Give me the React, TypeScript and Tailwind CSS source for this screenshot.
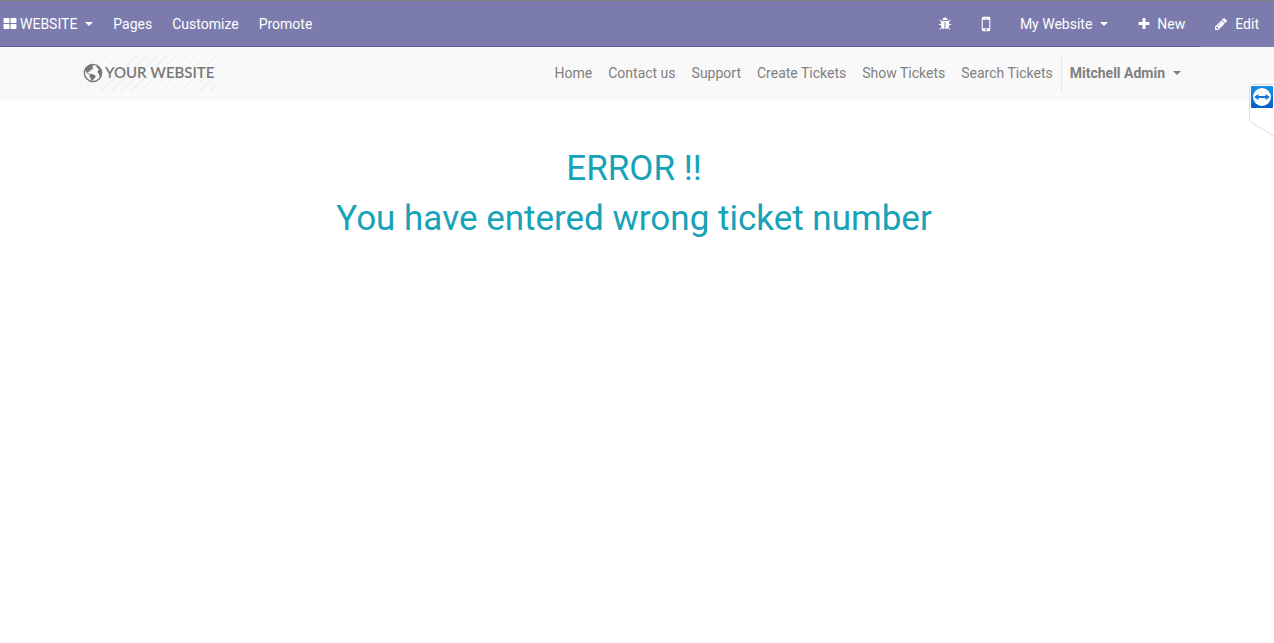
import React from "react";

const icons = {
  tiles:
    "M832 1024v384q0 52-38 90t-90 38h-512q-52 0-90-38t-38-90v-384q0-52 38-90t90-38h512q52 0 90 38t38 90zm0-768v384q0 52-38 90t-90 38h-512q-52 0-90-38t-38-90v-384q0-52 38-90t90-38h512q52 0 90 38t38 90zm896 768v384q0 52-38 90t-90 38h-512q-52 0-90-38t-38-90v-384q0-52 38-90t90-38h512q52 0 90 38t38 90zm0-768v384q0 52-38 90t-90 38h-512q-52 0-90-38t-38-90v-384q0-52 38-90t90-38h512q52 0 90 38t38 90z",
  plus:
    "M1600 736v192q0 40-28 68t-68 28h-416v416q0 40-28 68t-68 28h-192q-40 0-68-28t-28-68v-416h-416q-40 0-68-28t-28-68v-192q0-40 28-68t68-28h416v-416q0-40 28-68t68-28h192q40 0 68 28t28 68v416h416q40 0 68 28t28 68z",
  pencil:
    "M491 1536l91-91-235-235-91 91v107h128v128h107zm523-928q0-22-22-22-10 0-17 7l-542 542q-7 7-7 17 0 22 22 22 10 0 17-7l542-542q7-7 7-17zm-54-192l416 416-832 832h-416v-416zm683 96q0 53-37 90l-166 166-416-416 166-165q36-38 90-38 53 0 91 38l235 234q37 39 37 91z",
  bug:
    "M1696 960q0 26-19 45t-45 19h-224q0 171-67 290l208 209q19 19 19 45t-19 45q-18 19-45 19t-45-19l-198-197q-5 5-15 13t-42 28.5-65 36.5-82 29-97 13v-896h-128v896q-51 0-101.5-13.5t-87-33-66-39-43.5-32.5l-15-14-183 207q-20 21-48 21-24 0-43-16-19-18-20.5-44.5t15.5-46.5l202-227q-58-114-58-274h-224q-26 0-45-19t-19-45 19-45 45-19h224v-294l-173-173q-19-19-19-45t19-45 45-19 45 19l173 173h844l173-173q19-19 45-19t45 19 19 45-19 45l-173 173v294h224q26 0 45 19t19 45zm-480-576h-640q0-133 93.5-226.5t226.5-93.5 226.5 93.5 93.5 226.5z",
  mobile:
    "M976 1408q0-33-23.5-56.5t-56.5-23.5-56.5 23.5-23.5 56.5 23.5 56.5 56.5 23.5 56.5-23.5 23.5-56.5zm208-160v-704q0-13-9.5-22.5t-22.5-9.5h-512q-13 0-22.5 9.5t-9.5 22.5v704q0 13 9.5 22.5t22.5 9.5h512q13 0 22.5-9.5t9.5-22.5zm-192-848q0-16-16-16h-160q-16 0-16 16t16 16h160q16 0 16-16zm288-16v1024q0 52-38 90t-90 38h-512q-52 0-90-38t-38-90v-1024q0-52 38-90t90-38h512q52 0 90 38t38 90z",
};

function Icon({ name, className = "size-3.5" }: { name: keyof typeof icons; className?: string }) {
  return (
    <svg viewBox="0 0 1792 1792" className={`shrink-0 ${className}`} fill="currentColor" aria-hidden="true">
      <path d={icons[name]} />
    </svg>
  );
}

function Caret() {
  return (
    <svg viewBox="0 0 8 4" className="ml-2 h-1 w-2 shrink-0" fill="currentColor" aria-hidden="true">
      <path d="M0 0h8L4 4z" />
    </svg>
  );
}

function Globe() {
  return (
    <svg viewBox="0 0 20 20" className="size-5 shrink-0" aria-hidden="true">
      <circle cx="10" cy="10" r="8.6" fill="none" stroke="currentColor" strokeWidth="1.4" />
      <path
        fill="currentColor"
        d="M2.4 6.400C3.800 3.600 6 2 8.600 1.500l1.600.4.2 1.300-1.600.5 1.600 1.200-1 1.300-1.500.5-1.200 1.700-1.500.3-.6 1.200 1.500.6.6 1.200-1.600-.6L3.600 9.600 2.800 8zM6.400 11.400l2.400-.7 2.800 1.400 1.200 1.300-1.400 2.200-1.300 1-.8 1.700-1.300-.5-.2-2.400-1.400-1.900zM13.400 2.200c2.700 1.100 4.600 3.300 5.100 6.200l-.1 3.400-1.400 2-.8-.8-.2-2-1.100-1-.4-1.500.8-1.300.6-.8-1.300-1.300-.9-.9z"
      />
    </svg>
  );
}

const links = ["Home", "Contact us", "Support", "Create Tickets", "Show Tickets", "Search Tickets"];

export default function App() {
  return (
    <div className="relative min-h-screen overflow-x-hidden bg-white font-['Roboto',sans-serif] text-sm text-[#212529]">
      <div className="flex h-[47px] items-stretch justify-between border-t border-[#808080] bg-[#7c7bad] text-white">
        <nav aria-label="Website tools" className="flex flex-1 items-stretch border-b border-[#5f5e97]">
          <button type="button" className="flex items-center pr-2.5 pl-[3px]">
            <Icon name="tiles" className="mr-[3px] size-3.5" />
            WEBSITE
            <Caret />
          </button>
          <a href="#pages" className="flex items-center px-2.5">Pages</a>
          <a href="#customize" className="flex items-center px-2.5">Customize</a>
          <a href="#promote" className="flex items-center px-2.5">Promote</a>
        </nav>
        <div className="flex items-stretch border-b border-[#5f5e97]">
          <button type="button" aria-label="Debug" className="flex items-center px-3.5">
            <Icon name="bug" />
          </button>
          <button type="button" aria-label="Mobile preview" className="flex items-center px-2.5">
            <Icon name="mobile" className="size-5" />
          </button>
          <button type="button" className="flex items-center px-3.5">
            My Website
            <Caret />
          </button>
          <button type="button" className="flex items-center gap-1.5 px-[15px]">
            <Icon name="plus" />
            New
          </button>
        </div>
        <button type="button" className="flex items-center gap-[7px] pr-[15px] pl-3.5">
          <Icon name="pencil" />
          Edit
        </button>
      </div>

      <div className="pr-1.5">
        <header className="-mr-1.5 bg-[#f9f9f9] pr-1.5">
          <div className="mx-auto flex max-w-[1140px] items-center justify-between px-[15px] py-2">
            <a
              href="#home"
              className="flex h-[37px] items-center bg-[repeating-linear-gradient(135deg,#f9f9f9_0px,#f9f9f9_6px,#efefef_6px,#efefef_7px)] pr-1 pb-px pl-1 font-['Lato',sans-serif] text-[15px] text-[#777777]"
            >
              <Globe />
              <span className="ml-0.5 font-semibold">YOUR WEBSITE</span>
            </a>
            <nav aria-label="Main" className="flex items-center text-[#808080]">
              {links.map((l) => (
                <a key={l} href="#page" className="px-2 pb-0.5">{l}</a>
              ))}
              <button type="button" className="flex h-[37px] items-center border-l border-[#e6e6e6] px-2 pb-0.5 font-bold">
                Mitchell Admin
                <Caret />
              </button>
            </nav>
          </div>
        </header>

        <main className="px-4 pt-12 text-center text-[35px] leading-[42px] text-[#17a2b8]">
          <h1 className="mb-2">ERROR !!</h1>
          <h2>You have entered wrong ticket number</h2>
        </main>
      </div>

      <button type="button" aria-label="Remote session panel" className="absolute top-[84px] right-0">
        <svg viewBox="0 0 25 53" className="h-[53px] w-[25px]" aria-hidden="true">
          <defs>
            <linearGradient id="panel-blue" x1="0" y1="0" x2="0" y2="1">
              <stop offset="0" stopColor="#1490ea" />
              <stop offset="1" stopColor="#0560c4" />
            </linearGradient>
          </defs>
          <path d="M25 .5H3.500Q.5.5.5 3.500V35q0 2.500 2 3.700L25 52" fill="#fff" stroke="#d9dde3" />
          <rect x="2" y="2" width="22" height="22" rx="1" fill="url(#panel-blue)" />
          <circle cx="13" cy="13" r="9" fill="#fff" />
          <path d="M5 13l4.500-3v2h7v-2l4.500 3-4.500 3v-2h-7v2z" fill="#0d78d8" />
        </svg>
      </button>
    </div>
  );
}
